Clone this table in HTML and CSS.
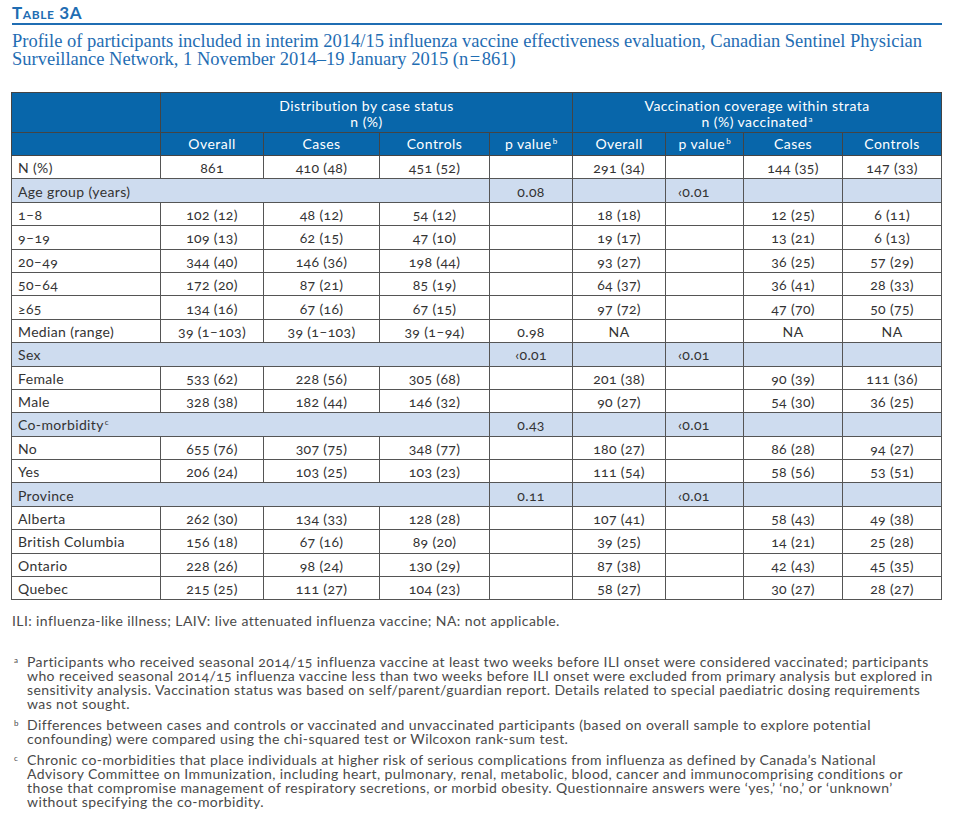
FILE: index.html
```html
<!DOCTYPE html>
<html lang="en">
<head>
<meta charset="utf-8">
<title>Table 3A</title>
<link rel="stylesheet" href="styles.css">
</head>
<body>
<div class="page">
  <h1 class="label">Table 3A</h1>
  <p class="caption">Profile of participants included in interim 2014/15 influenza vaccine effectiveness evaluation, Canadian Sentinel Physician<br>Surveillance Network, 1 November 2014–19 January 2015 (n&#8202;=&#8202;861)</p>

  <table class="data">
    <colgroup>
      <col class="c-label"><col class="c-ov"><col class="c-cases"><col class="c-ctrl"><col class="c-p">
      <col class="c-ov2"><col class="c-p2"><col class="c-cases2"><col class="c-ctrl2">
    </colgroup>
    <thead>
      <tr class="h1">
        <th></th>
        <th colspan="4">Distribution by case status<br>n (%)</th>
        <th colspan="4">Vaccination coverage within strata<br>n (%) vaccinated<sup>a</sup></th>
      </tr>
      <tr class="h2">
        <th></th>
        <th>Overall</th><th>Cases</th><th>Controls</th><th>p value<sup>b</sup></th>
        <th>Overall</th><th>p value<sup>b</sup></th><th>Cases</th><th>Controls</th>
      </tr>
    </thead>
    <tbody>
      <tr><td class="lbl">N (%)</td><td>861</td><td>410 (48)</td><td>451 (52)</td><td></td><td>291 (34)</td><td></td><td>144 (35)</td><td>147 (33)</td></tr>
      <tr class="sec"><td class="lbl" colspan="4">Age group (years)</td><td>0.08</td><td></td><td class="pl">‹0.01</td><td></td><td></td></tr>
      <tr><td class="lbl">1–8</td><td>102 (12)</td><td>48 (12)</td><td>54 (12)</td><td></td><td>18 (18)</td><td></td><td>12 (25)</td><td>6 (11)</td></tr>
      <tr><td class="lbl">9–19</td><td>109 (13)</td><td>62 (15)</td><td>47 (10)</td><td></td><td>19 (17)</td><td></td><td>13 (21)</td><td>6 (13)</td></tr>
      <tr><td class="lbl">20–49</td><td>344 (40)</td><td>146 (36)</td><td>198 (44)</td><td></td><td>93 (27)</td><td></td><td>36 (25)</td><td>57 (29)</td></tr>
      <tr><td class="lbl">50–64</td><td>172 (20)</td><td>87 (21)</td><td>85 (19)</td><td></td><td>64 (37)</td><td></td><td>36 (41)</td><td>28 (33)</td></tr>
      <tr><td class="lbl">≥65</td><td>134 (16)</td><td>67 (16)</td><td>67 (15)</td><td></td><td>97 (72)</td><td></td><td>47 (70)</td><td>50 (75)</td></tr>
      <tr><td class="lbl">Median (range)</td><td>39 (1–103)</td><td>39 (1–103)</td><td>39 (1–94)</td><td>0.98</td><td>NA</td><td></td><td>NA</td><td>NA</td></tr>
      <tr class="sec"><td class="lbl" colspan="4">Sex</td><td>‹0.01</td><td></td><td class="pl">‹0.01</td><td></td><td></td></tr>
      <tr><td class="lbl">Female</td><td>533 (62)</td><td>228 (56)</td><td>305 (68)</td><td></td><td>201 (38)</td><td></td><td>90 (39)</td><td>111 (36)</td></tr>
      <tr><td class="lbl">Male</td><td>328 (38)</td><td>182 (44)</td><td>146 (32)</td><td></td><td>90 (27)</td><td></td><td>54 (30)</td><td>36 (25)</td></tr>
      <tr class="sec"><td class="lbl" colspan="4">Co-morbidity<sup>c</sup></td><td>0.43</td><td></td><td class="pl">‹0.01</td><td></td><td></td></tr>
      <tr><td class="lbl">No</td><td>655 (76)</td><td>307 (75)</td><td>348 (77)</td><td></td><td>180 (27)</td><td></td><td>86 (28)</td><td>94 (27)</td></tr>
      <tr><td class="lbl">Yes</td><td>206 (24)</td><td>103 (25)</td><td>103 (23)</td><td></td><td>111 (54)</td><td></td><td>58 (56)</td><td>53 (51)</td></tr>
      <tr class="sec"><td class="lbl" colspan="4">Province</td><td>0.11</td><td></td><td class="pl">‹0.01</td><td></td><td></td></tr>
      <tr><td class="lbl">Alberta</td><td>262 (30)</td><td>134 (33)</td><td>128 (28)</td><td></td><td>107 (41)</td><td></td><td>58 (43)</td><td>49 (38)</td></tr>
      <tr><td class="lbl">British Columbia</td><td>156 (18)</td><td>67 (16)</td><td>89 (20)</td><td></td><td>39 (25)</td><td></td><td>14 (21)</td><td>25 (28)</td></tr>
      <tr><td class="lbl">Ontario</td><td>228 (26)</td><td>98 (24)</td><td>130 (29)</td><td></td><td>87 (38)</td><td></td><td>42 (43)</td><td>45 (35)</td></tr>
      <tr><td class="lbl">Quebec</td><td>215 (25)</td><td>111 (27)</td><td>104 (23)</td><td></td><td>58 (27)</td><td></td><td>30 (27)</td><td>28 (27)</td></tr>
    </tbody>
  </table>

  <p class="abbr">ILI: influenza-like illness; LAIV: live attenuated influenza vaccine; NA: not applicable.</p>

  <ol class="notes">
    <li><span class="mark">a</span><span class="ntext">Participants who received seasonal 2014/15 influenza vaccine at least two weeks before ILI onset were considered vaccinated; participants<br>who received seasonal 2014/15 influenza vaccine less than two weeks before ILI onset were excluded from primary analysis but explored in<br>sensitivity analysis. Vaccination status was based on self/parent/guardian report. Details related to special paediatric dosing requirements<br>was not sought.</span></li>
    <li><span class="mark">b</span><span class="ntext">Differences between cases and controls or vaccinated and unvaccinated participants (based on overall sample to explore potential<br>confounding) were compared using the chi-squared test or Wilcoxon rank-sum test.</span></li>
    <li><span class="mark">c</span><span class="ntext">Chronic co-morbidities that place individuals at higher risk of serious complications from influenza as defined by Canada’s National<br>Advisory Committee on Immunization, including heart, pulmonary, renal, metabolic, blood, cancer and immunocomprising conditions or<br>those that compromise management of respiratory secretions, or morbid obesity. Questionnaire answers were ‘yes,’ ‘no,’ or ‘unknown’<br>without specifying the co-morbidity.</span></li>
  </ol>
</div>
</body>
</html>
```

FILE: styles.css
```css
* { box-sizing: border-box; }
html, body { margin: 0; padding: 0; background: #fff; }
body {
  font-family: Lato, "Open Sans", "Noto Sans", sans-serif;
  color: #333;
  font-variant-numeric: oldstyle-nums;
}
.page {
  padding: 3px 0 0 11px;
  width: 960px;
}
.label {
  width: 930px;
  margin: 0 0 0 1px;
  font-size: 17px;
  line-height: 20px;
  font-weight: 700;
  font-variant: small-caps;
  letter-spacing: 0.6px;
  color: #1f6db3;
  border-bottom: 2px solid #1f6db3;
  padding-bottom: 0;
}
.caption {
  margin: 7px 0 0 1px;
  font-family: "Liberation Serif", "DejaVu Serif", serif;
  font-size: 18.5px;
  line-height: 18px;
  color: #1f6db3;
  white-space: nowrap;
}
.data {
  margin-top: 24px;
  width: 930px;
  border-collapse: collapse;
  table-layout: fixed;
  font-size: 14px;
  letter-spacing: 0.35px;
  border: 1px solid #555;
}
.c-label { width: 149px; }
.c-ov { width: 103px; }
.c-cases { width: 116px; }
.c-ctrl { width: 110px; }
.c-p { width: 83px; }
.c-ov2 { width: 93px; }
.c-p2 { width: 78px; }
.c-cases2 { width: 99px; }
.c-ctrl2 { width: 99px; }
.data th, .data td {
  border: 1px solid #555;
  padding: 0 6px;
  text-align: center;
  font-weight: 400;
  white-space: nowrap;
}
.data th {
  background: #0866aa;
  color: #fff;
  border-color: #444;
  letter-spacing: 0.45px;
}
.data tr.h1 th { height: 40px; line-height: 16px; padding-top: 3px; }
.data tr.h2 th { height: 23px; line-height: 18px; }
.data tbody tr { height: 23.4px; }
.data td { line-height: 18px; padding-top: 2px; }
.data td.lbl { text-align: left; }
.data td.pl { text-align: left; padding-left: 12px; }
.data tr.sec td { background: #cedcef; }
.data sup {
  font-size: 8px;
  line-height: 0;
  vertical-align: 5px;
  margin-left: 1px;
  letter-spacing: 0;
}
.abbr {
  margin: 13px 0 0 1px;
  font-size: 14px;
  line-height: 16px;
  letter-spacing: 0.4px;
  color: #4a4a4a;
}
.notes {
  list-style: none;
  margin: 26px 0 0 0;
  padding: 0;
  font-size: 14px;
  line-height: 14px;
  letter-spacing: 0.4px;
  color: #4a4a4a;
}
.notes li {
  display: flex;
  margin-bottom: 7px;
}
.mark {
  width: 16px;
  flex: none;
  font-size: 8px;
  line-height: 10px;
  padding-left: 3px;
  letter-spacing: 0;
}
.ntext { flex: 1; white-space: nowrap; }
```
